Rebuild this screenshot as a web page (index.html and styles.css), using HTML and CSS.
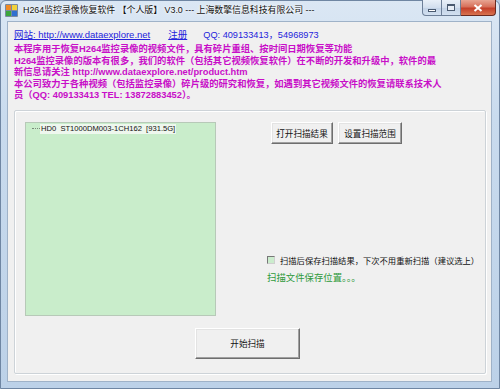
FILE: index.html
```html
<!DOCTYPE html>
<html lang="zh-CN">
<head>
<meta charset="utf-8">
<title>H264监控录像恢复软件</title>
<link rel="stylesheet" href="styles.css">
</head>
<body>
<div class="window">
  <div class="titlebar">
    <svg class="app-icon" width="13" height="13" viewBox="0 0 13 13">
      <rect x="0" y="0" width="13" height="13" rx="1" fill="#7a8aa0"/>
      <rect x="1" y="1" width="5" height="5" fill="#f08a24"/>
      <rect x="7" y="1" width="5" height="5" fill="#f2d23a"/>
      <rect x="1" y="7" width="5" height="5" fill="#3ca63c"/>
      <rect x="7" y="7" width="5" height="5" fill="#2f6fd0"/>
    </svg>
    <span class="title">H264监控录像恢复软件 【个人版】 V3.0 --- 上海数擎信息科技有限公司 ---</span>
    <div class="controls">
      <span class="ctl ctl-min"><i class="min-bar"></i></span>
      <span class="ctl ctl-max"><i class="max-box"></i></span>
      <span class="ctl ctl-close">
        <svg width="10" height="8" viewBox="0 0 10 8"><path d="M1.5 1 L8.5 7 M8.5 1 L1.5 7" stroke="#fff" stroke-width="2"/></svg>
      </span>
    </div>
  </div>
  <div class="client">
    <div class="links">
      <a class="link site">网站: http://www.dataexplore.net</a>
      <a class="link reg">注册</a>
      <span class="qq">QQ: 409133413，54968973</span>
    </div>
    <div class="notice">
      <div>本程序用于恢复H264监控录像的视频文件，具有碎片重组、按时间日期恢复等功能</div>
      <div>H264监控录像的版本有很多，我们的软件（包括其它视频恢复软件）在不断的开发和升级中，软件的最</div>
      <div>新信息请关注 http://www.dataexplore.net/product.htm</div>
      <div>本公司致力于各种视频（包括监控录像）碎片级的研究和恢复，如遇到其它视频文件的恢复请联系技术人</div>
      <div>员（QQ: 409133413 TEL: 13872883452）。</div>
    </div>
    <div class="group">
      <div class="group-main">
        <div class="listbox">
          <div class="tree-item"><span class="tree-line"></span><span class="tree-text">HD0&nbsp; ST1000DM003-1CH162&nbsp; [931.5G]</span></div>
        </div>
        <div class="side">
          <div class="btn-row">
            <button class="btn btn-open">打开扫描结果</button>
            <button class="btn btn-range">设置扫描范围</button>
          </div>
          <label class="check-row"><span class="checkbox"></span><span class="check-text">扫描后保存扫描结果，下次不用重新扫描（建议选上）</span></label>
          <div class="save-path">扫描文件保存位置。。。</div>
        </div>
      </div>
      <div class="start-row">
        <button class="btn btn-start">开始扫描</button>
      </div>
    </div>
  </div>
</div>
</body>
</html>
```
FILE: styles.css
```css
* { box-sizing: border-box; }
html, body { margin: 0; padding: 0; }
body {
  width: 500px;
  height: 389px;
  overflow: hidden;
  background: #b9cde3;
  font-family: "Liberation Sans", "Noto Sans CJK SC", sans-serif;
}
.window {
  width: 500px;
  height: 389px;
  display: flex;
  flex-direction: column;
  background: linear-gradient(180deg, #dbe7f4 0%, #c9dbee 30%, #bcd1e8 100%);
  border: 1px solid #6f86a3;
  border-radius: 6px 6px 0 0;
}
.titlebar {
  height: 20px;
  display: flex;
  align-items: flex-start;
  padding-left: 4px;
  padding-right: 3px;
}
.app-icon { margin-top: 3px; flex: none; }
.title {
  margin-left: 5px;
  margin-top: 3px;
  font-size: 8.9px;
  line-height: 12px;
  color: #111;
  white-space: nowrap;
  text-shadow: 0 0 4px #fff, 0 0 2px #fff;
}
.controls {
  margin-left: auto;
  display: flex;
  height: 16px;
  margin-top: -1px;
}
.ctl {
  display: flex;
  align-items: center;
  justify-content: center;
  height: 16px;
  border: 1px solid #6d7f98;
  border-top: none;
}
.ctl-min {
  width: 20px;
  border-radius: 0 0 0 4px;
  background: linear-gradient(180deg, #e9f0f8 0%, #d3dfee 50%, #c2d2e6 51%, #d2e0f0 100%);
}
.ctl-max {
  width: 19px;
  border-left: none;
  background: linear-gradient(180deg, #e9f0f8 0%, #d3dfee 50%, #c2d2e6 51%, #d2e0f0 100%);
}
.ctl-close {
  width: 35px;
  border-left: none;
  border-radius: 0 0 4px 0;
  border-color: #6a2a20;
  background: linear-gradient(180deg, #e8a593 0%, #d7705a 45%, #c4402a 55%, #d8734f 100%);
}
.min-bar {
  display: block;
  width: 8px;
  height: 3px;
  margin-top: 5px;
  background: #fff;
  border: 1px solid #4a5a70;
}
.max-box {
  display: block;
  width: 8px;
  height: 7px;
  border: 1px solid #4a5a70;
  border-top-width: 2px;
  background: #e8eef6;
}
.client {
  flex: 1;
  margin: 0 7px 6px 6px;
  background: #f0f0f0;
  border: 1px solid #9fb2c8;
  padding: 7px 5px 0 6px;
  display: flex;
  flex-direction: column;
}
.links {
  display: flex;
  height: 12px;
  line-height: 12px;
  font-size: 9.5px;
  color: #2424dc;
  white-space: nowrap;
}
.link { text-decoration: underline; color: #2424dc; }
.reg { margin-left: 18px; }
.qq { margin-left: 16px; font-size: 9.2px; }
.notice {
  margin-top: 3px;
  font-size: 9.3px;
  line-height: 11.6px;
  font-weight: bold;
  color: #c80ec8;
  white-space: nowrap;
}
.group {
  margin-top: 8px;
  height: 264px;
  border: 1px solid #cdd3d8;
  box-shadow: inset 1px 1px 0 #fff, 1px 1px 0 #fff;
  border-radius: 2px;
  padding: 11px 4px 0 10px;
  display: flex;
  flex-direction: column;
}
.group-main {
  display: flex;
  gap: 51px;
}
.listbox {
  flex: none;
  width: 191px;
  height: 194px;
  background: #c9edcb;
  border: 1px solid #b7c9b8;
  padding: 1px 0 0 6px;
}
.tree-item {
  display: flex;
  align-items: center;
  height: 10px;
}
.tree-line {
  width: 8px;
  border-top: 1px dotted #7a8a7a;
}
.tree-text {
  font-size: 7.6px;
  line-height: 10px;
  color: #111;
  background: #eef7ee;
  padding: 0 1px;
  white-space: nowrap;
}
.side {
  flex: 1;
  min-width: 0;
  display: flex;
  flex-direction: column;
}
.btn-row {
  display: flex;
  gap: 5px;
  margin-left: 4px;
}
.btn {
  font-family: "Noto Sans CJK SC", "Liberation Sans", sans-serif;
  font-size: 8.6px;
  color: #111;
  background: #f0f0f0;
  border: 1px solid;
  border-color: #ffffff #6e6e6e #6e6e6e #ffffff;
  box-shadow: inset -1px -1px 0 #a0a0a0, inset 1px 1px 0 #e3e3e3;
  padding: 0;
  line-height: 1;
}
.btn-open { width: 62px; height: 22px; }
.btn-range { width: 64px; height: 22px; }
.check-row {
  margin-top: 110px;
  display: flex;
  align-items: center;
  height: 12px;
  white-space: nowrap;
}
.checkbox {
  flex: none;
  width: 8px;
  height: 8px;
  border: 1px solid;
  border-color: #777 #cfcfcf #cfcfcf #777;
  background: #cbeccd;
}
.check-text {
  margin-left: 5px;
  font-size: 8.3px;
  color: #111;
  font-family: "Noto Sans CJK SC", sans-serif;
}
.save-path {
  margin-top: 5px;
  font-size: 9.4px;
  line-height: 12px;
  color: #2f9a3c;
  white-space: nowrap;
  font-family: "Noto Sans CJK SC", sans-serif;
}
.start-row {
  display: flex;
  margin-top: 12px;
  padding-left: 170px;
}
.btn-start { width: 105px; height: 31px; }
```
